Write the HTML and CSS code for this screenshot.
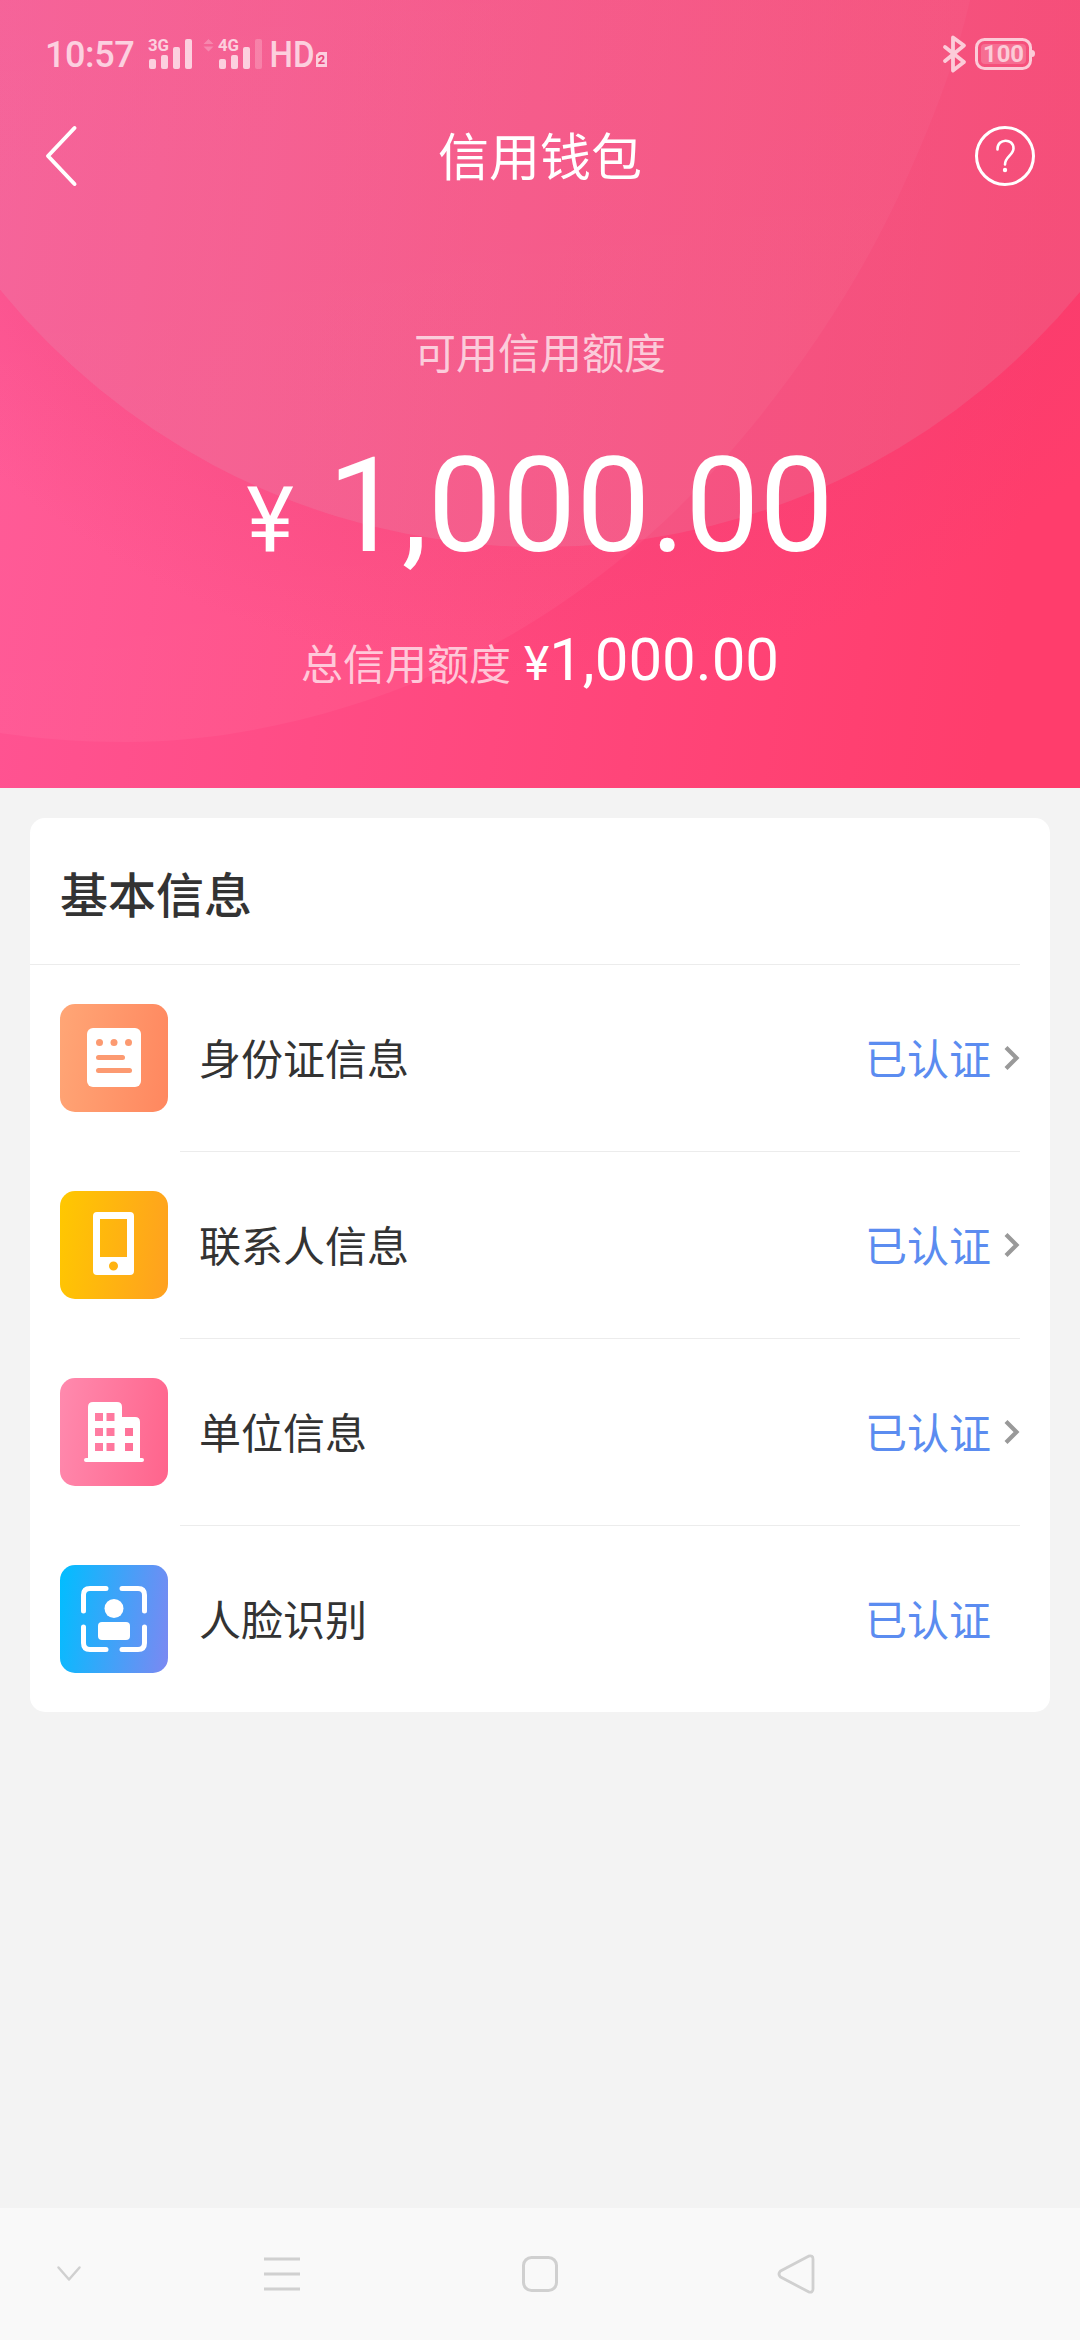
FILE: index.html
```html
<!DOCTYPE html>
<html lang="zh-CN">
<head>
<meta charset="utf-8">
<title>信用钱包</title>
<link rel="stylesheet" href="styles.css">
</head>
<body>
<div class="screen">
  <header class="hero">
    <svg class="hero-art" viewBox="0 0 1080 788" aria-hidden="true">
      <defs>
        <linearGradient id="discShade" x1="0" y1="0" x2="0" y2="1">
          <stop offset="0" stop-color="#fff" stop-opacity="0.03"/>
          <stop offset="1" stop-color="#fff" stop-opacity="0.045"/>
        </linearGradient>
        <radialGradient id="halo" gradientUnits="userSpaceOnUse" cx="541" cy="-150" r="830">
          <stop offset="0.84" stop-color="#ec3a70" stop-opacity="0.2"/>
          <stop offset="1" stop-color="#ec3a70" stop-opacity="0"/>
        </radialGradient>
      </defs>
      <circle cx="541" cy="-150" r="830" fill="url(#halo)"/>
      <path fill="url(#discShade)" d="M0 0H970C955 66 928 132 900 193C862 275 812 352 757 420C718 468 676 514 628 553C548 620 450 676 346 707C275 729 200 742 125 742C82 742 40 739 0 733Z"/>
      <circle cx="541" cy="-150" r="697" fill="#c8e6e8" fill-opacity="0.11"/>
    </svg>
    <div class="status-bar">
      <span class="clock">10:57</span>
      <svg class="signals" width="182" height="40" viewBox="146 34 182 40">
        <g fill="#fff">
          <text x="148" y="51" class="net" textLength="21" lengthAdjust="spacingAndGlyphs">3G</text>
          <rect x="149" y="59" width="7" height="10" rx="2"/><rect x="161" y="55" width="7" height="14" rx="2"/><rect x="173" y="47" width="7" height="22" rx="2"/><rect x="185" y="39" width="7" height="30" rx="2"/>
          <path opacity=".35" d="M203.500 44L208.500 39L213.500 44ZM203.500 46.500L208.500 51.500L213.500 46.500Z"/>
          <text x="218" y="51" class="net" textLength="21" lengthAdjust="spacingAndGlyphs">4G</text>
          <rect x="219" y="59" width="7" height="10" rx="2"/><rect x="231" y="55" width="7" height="14" rx="2"/><rect x="243" y="47" width="7" height="22" rx="2"/><rect opacity=".3" x="255" y="39" width="7" height="30" rx="2"/>
          <text x="269.500" y="67" class="hd" textLength="45" lengthAdjust="spacingAndGlyphs">HD</text>
          <path d="M319 52H327V67H316V55Z"/>
        </g>
        <text x="321.500" y="64" class="sim">2</text>
      </svg>
      <svg class="power" width="94" height="40" viewBox="942 34 94 40">
        <path d="M945 47L964 62L953 70.500V37.500L964 45.500L945 61" fill="none" stroke="#fff" stroke-width="3.800" stroke-linejoin="round" stroke-linecap="round"/>
        <rect x="976.500" y="39.500" width="54" height="29" rx="8" fill="none" stroke="#fff" stroke-width="3"/>
        <path d="M1032 50Q1035 50 1035 53.500Q1035 57 1032 57Z" fill="#fff"/>
        <rect x="981" y="44" width="45" height="20" rx="4" fill="#fff" opacity=".25"/>
        <text x="1003.500" y="62" class="level" textLength="41" lengthAdjust="spacingAndGlyphs">100</text>
      </svg>
    </div>
    <nav class="title-bar">
      <svg width="32" height="62" viewBox="0 0 32 62"><path d="M29.500 3L3 31L29.500 59" fill="none" stroke="#fff" stroke-width="4" stroke-linecap="round" stroke-linejoin="round"/></svg>
      <h1>信用钱包</h1>
      <svg width="60" height="60" viewBox="0 0 60 60"><circle cx="30" cy="30" r="28.500" fill="none" stroke="#fff" stroke-width="3"/><path d="M22.500 23.500V23C22.500 12 38.500 12 38.500 22.500C38.500 29 30 30.500 30 38.500" fill="none" stroke="#fff" stroke-width="2.600" stroke-linecap="round"/><circle cx="30" cy="44" r="2.200" fill="#fff"/></svg>
    </nav>
    <p class="limit-label">可用信用额度</p>
    <p class="limit"><span class="yen">¥</span><span>1,000.00</span></p>
    <p class="total"><span class="total-label">总信用额度</span><span class="total-yen">¥</span><span class="total-value">1,000.00</span></p>
  </header>

  <main class="card">
    <h2>基本信息</h2>
    <ul class="rows">
      <li class="row">
        <span class="tile tile-id"><svg width="108" height="108" viewBox="0 0 108 108"><rect x="27" y="24" width="54" height="59" rx="6" fill="#fff"/><g fill="#fc9a71"><circle cx="39.500" cy="38.500" r="3.500"/><circle cx="54" cy="38.500" r="3.500"/><circle cx="68.500" cy="38.500" r="3.500"/><rect x="36" y="51" width="29" height="5" rx="2.500"/><rect x="36" y="64" width="36" height="5" rx="2.500"/></g></svg></span>
        <div class="row-body"><span class="name">身份证信息</span><span class="state">已认证</span><svg class="arrow" width="16" height="26" viewBox="0 0 16 26"><path d="M2 2.500L12.500 13L2 23.500" fill="none" stroke="#999" stroke-width="4.200"/></svg></div>
      </li>
      <li class="row">
        <span class="tile tile-contact"><svg width="108" height="108" viewBox="0 0 108 108"><path fill="#fff" fill-rule="evenodd" d="M37 21H70Q74 21 74 25V80Q74 84 70 84H37Q33 84 33 80V25Q33 21 37 21ZM40 28V66H67V28ZM53.500 70.500A4.500 4.500 0 1 0 53.500 79.500A4.500 4.500 0 1 0 53.500 70.500Z"/></svg></span>
        <div class="row-body"><span class="name">联系人信息</span><span class="state">已认证</span><svg class="arrow" width="16" height="26" viewBox="0 0 16 26"><path d="M2 2.500L12.500 13L2 23.500" fill="none" stroke="#999" stroke-width="4.200"/></svg></div>
      </li>
      <li class="row">
        <span class="tile tile-company"><svg width="108" height="108" viewBox="0 0 108 108"><path fill="#fff" fill-rule="evenodd" d="M28 80V29Q28 24 33 24H57Q62 24 62 29V39H75Q80 39 80 44V80H82A2 2 0 0 1 82 84H26A2 2 0 0 1 26 80ZM35 35V43H43V35ZM46.500 35V43H54.500V35ZM35 50V58H43V50ZM46.500 50V58H54.500V50ZM65 50V58H73V50ZM35 65V73H43V65ZM46.500 65V73H54.500V65ZM65 65V73H73V65Z"/></svg></span>
        <div class="row-body"><span class="name">单位信息</span><span class="state">已认证</span><svg class="arrow" width="16" height="26" viewBox="0 0 16 26"><path d="M2 2.500L12.500 13L2 23.500" fill="none" stroke="#999" stroke-width="4.200"/></svg></div>
      </li>
      <li class="row">
        <span class="tile tile-face"><svg width="108" height="108" viewBox="0 0 108 108"><path d="M46 23.500H30Q23.500 23.500 23.500 30V46M62 23.500H78Q84.500 23.500 84.500 30V46M23.500 62V78Q23.500 84.500 30 84.500H46M84.500 62V78Q84.500 84.500 78 84.500H62" fill="none" stroke="#fff" stroke-width="5" stroke-linecap="round"/><circle cx="54" cy="43.500" r="9.500" fill="#fff"/><rect x="38" y="57" width="32" height="18" rx="4" fill="#fff"/></svg></span>
        <div class="row-body"><span class="name">人脸识别</span><span class="state">已认证</span><span class="arrow"></span></div>
      </li>
    </ul>
  </main>

  <footer class="system-nav">
    <svg width="24" height="18" viewBox="0 0 24 18"><path d="M1.500 2.500L12 14.500L22.500 2.500" stroke-width="2.500" stroke-linecap="round" stroke-linejoin="round"/></svg>
    <svg width="36" height="34" viewBox="0 0 36 34"><path d="M0 2H36M0 17H36M0 32H36" stroke-width="3"/></svg>
    <svg width="36" height="36" viewBox="0 0 36 36"><rect x="1.500" y="1.500" width="33" height="33" rx="8" stroke-width="3"/></svg>
    <svg width="38" height="40" viewBox="0 0 38 40"><path d="M31.500 2.200L3.500 17Q0.500 20 3.500 23L31.500 37.800Q36 39 36 35V5Q36 1 31.500 2.200Z" stroke-width="2.800" stroke-linejoin="round"/></svg>
  </footer>
</div>
</body>
</html>
```
FILE: styles.css
```css
* { box-sizing: border-box; margin: 0; padding: 0; }

body {
  background: #f3f3f3;
  color: #333;
  font-family: "Noto Sans CJK SC", Roboto, sans-serif;
}

svg { display: block; flex: none; overflow: visible; }

.screen {
  width: 1080px;
  height: 2340px;
  display: flex;
  flex-direction: column;
  overflow: hidden;
}

.hero {
  position: relative;
  height: 788px;
  flex: none;
  color: #fff;
  background: linear-gradient(98deg, #ff5595 0%, #ff487e 50%, #ff3d6c 92%);
}

.hero > * { position: relative; }

.hero > .hero-art {
  position: absolute;
  inset: 0;
  width: 1080px;
  height: 788px;
  overflow: hidden;
}

.status-bar {
  height: 108px;
  padding: 0 44px 0 45px;
  display: flex;
  align-items: center;
  opacity: 0.7;
}

.clock {
  width: 101px;
  font: 500 36px/40px Roboto, sans-serif;
  letter-spacing: -0.4px;
  padding-top: 2px;
}

.power { margin-left: auto; }

.net { font: 700 17px Roboto, sans-serif; }
.hd { font: 500 36px Roboto, sans-serif; }
.sim { font: 700 13px Roboto, sans-serif; fill: #e63d72; text-anchor: middle; }
.level { font: 700 24px Roboto, sans-serif; fill: #fff; text-anchor: middle; }

.title-bar {
  height: 96px;
  padding: 0 45px;
  display: grid;
  grid-template-columns: 60px 1fr 60px;
  align-items: center;
}

h1 {
  padding-bottom: 4px;
  font-size: 51px;
  font-weight: 400;
  line-height: 72px;
  text-align: center;
}

.limit-label {
  margin-top: 117px;
  font-size: 42px;
  line-height: 60px;
  text-align: center;
  color: rgba(255, 255, 255, 0.7);
}

.limit {
  display: flex;
  justify-content: center;
  align-items: baseline;
  gap: 34px;
  margin-top: 47px;
  font: 400 132px/156px Roboto, sans-serif;
}

.yen { font-size: 90px; }

.total {
  display: flex;
  justify-content: center;
  align-items: baseline;
  margin-top: 25px;
  line-height: 72px;
}

.total-label {
  font-size: 42px;
  color: rgba(255, 255, 255, 0.7);
  margin-right: 13px;
}

.total-yen { font-family: Roboto, sans-serif; font-size: 48px; }
.total-value { font-family: Roboto, sans-serif; font-size: 60px; }

.card {
  width: 1020px;
  height: 894px;
  margin: 30px auto 0;
  flex: none;
  background: #fff;
  border-radius: 15px;
}

h2 {
  height: 147px;
  margin-right: 30px;
  padding: 4px 0 0 30px;
  border-bottom: 1px solid #ececec;
  font-size: 48px;
  font-weight: 500;
  line-height: 141px;
}

.rows { list-style: none; }

.row {
  display: flex;
  align-items: center;
  height: 187px;
  padding: 0 30px;
}

.tile {
  width: 108px;
  height: 108px;
  margin: 0 12px 1px 0;
  border-radius: 15px;
  flex: none;
}

.tile-id { background: linear-gradient(98deg, #ffa676, #ff875f); }
.tile-contact { background: linear-gradient(98deg, #ffc800, #ffa020); }
.tile-company { background: linear-gradient(98deg, #ff8aae, #ff648c); }
.tile-face { background: linear-gradient(98deg, #00beff, #7c88f2); }

.row-body {
  flex: 1;
  height: 187px;
  padding-left: 19px;
  display: flex;
  align-items: center;
  border-bottom: 1px solid #ececec;
  font-size: 42px;
  line-height: 60px;
}

.row:last-child .row-body { border-bottom: 0; }

.name,
.state { padding-bottom: 3px; }

.name { flex: 1; }
.state { color: #5b8cf0; }
.arrow { width: 16px; margin-left: 13px; }

.system-nav {
  margin-top: auto;
  height: 132px;
  display: grid;
  grid-template-columns: 138px 288px 228px 284px;
  align-items: center;
  justify-items: center;
  background: #f9f9f9;
}

.system-nav path,
.system-nav rect { fill: none; stroke: #d0d0d0; }
```
